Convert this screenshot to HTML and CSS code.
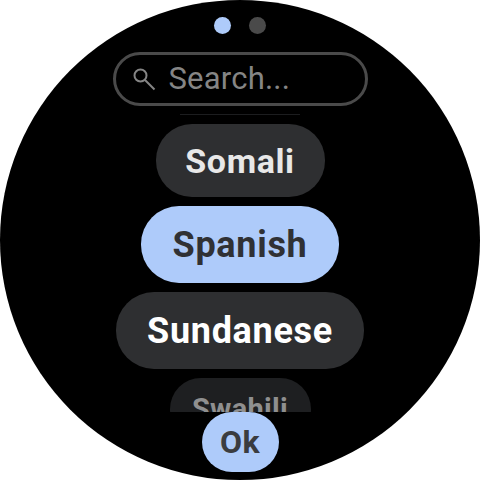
FILE: index.html
```html
<!DOCTYPE html>
<html lang="en">
<head>
    <meta charset="UTF-8">
    <meta name="viewport" content="width=device-width, initial-scale=1.0">
    <title>Languages</title>
    <link rel="stylesheet" href="styles.css">
</head>
<body>
    <div class="watch">
        <div class="dots">
            <span class="dot active"></span>
            <span class="dot"></span>
        </div>
        <div class="search">
            <svg class="search-icon" viewBox="0 0 24 24" width="24" height="24">
                <circle cx="8.5" cy="8.5" r="6" fill="none" stroke="currentColor" stroke-width="2"/>
                <path d="M13 13 L22.5 22.5" fill="none" stroke="currentColor" stroke-width="2"/>
            </svg>
            <span class="search-text">Search...</span>
        </div>
        <div class="list">
            <div class="peek"></div>
            <div class="chip somali">Somali</div>
            <div class="chip selected">Spanish</div>
            <div class="chip sundanese">Sundanese</div>
            <div class="chip swahili">Swahili</div>
        </div>
        <div class="ok">Ok</div>
    </div>
</body>
</html>
```

FILE: styles.css
```css
body {
    margin: 0;
    background: #fff;
    font-family: Roboto, 'Liberation Sans', sans-serif;
}
.watch {
    width: 480px;
    height: 480px;
    border-radius: 50%;
    background: #000;
    overflow: hidden;
    display: flex;
    flex-direction: column;
    align-items: center;
}
.dots {
    display: flex;
    gap: 18px;
    margin-top: 17px;
}
.dot {
    width: 17px;
    height: 17px;
    border-radius: 50%;
    background: #4a4a4a;
}
.dot.active {
    background: #aecbfa;
}
.search {
    box-sizing: border-box;
    width: 255px;
    height: 54px;
    margin-top: 18px;
    padding-left: 16px;
    border: 3px solid #4a4a4a;
    border-radius: 27px;
    display: flex;
    align-items: center;
    gap: 13px;
    color: #858585;
}
.search-icon {
    flex: none;
}
.search-text {
    font-size: 31px;
    letter-spacing: 0.2px;
    margin-top: -2px;
}
.list {
    width: 100%;
    height: 298px;
    margin-top: 8px;
    overflow: hidden;
    display: flex;
    flex-direction: column;
    align-items: center;
}
.peek {
    flex: none;
    width: 120px;
    height: 1px;
    background: #1c1d1f;
}
.chip {
    flex: none;
    box-sizing: border-box;
    height: 77px;
    margin-top: 9px;
    border-radius: 38px;
    background: #2e2f31;
    color: #fff;
    font-size: 36px;
    font-weight: 700;
    letter-spacing: 0.7px;
    display: flex;
    align-items: center;
    justify-content: center;
}
.somali {
    width: 169px;
    height: 73px;
    border-radius: 36px;
    color: #e8e8e8;
    font-size: 34px;
    letter-spacing: 0.6px;
}
.selected {
    width: 198px;
    background: #aecbfa;
    color: #303134;
}
.sundanese {
    width: 248px;
}
.swahili {
    width: 141px;
    height: 62px;
    border-radius: 31px;
    background: #1e1f21;
    color: #8f8f8f;
    font-size: 29px;
    letter-spacing: 0.3px;
}
.ok {
    width: 77px;
    height: 60px;
    border-radius: 30px;
    background: #aecbfa;
    color: #3a3c40;
    font-size: 32px;
    font-weight: 700;
    letter-spacing: 0.4px;
    display: flex;
    align-items: center;
    justify-content: center;
}
```
